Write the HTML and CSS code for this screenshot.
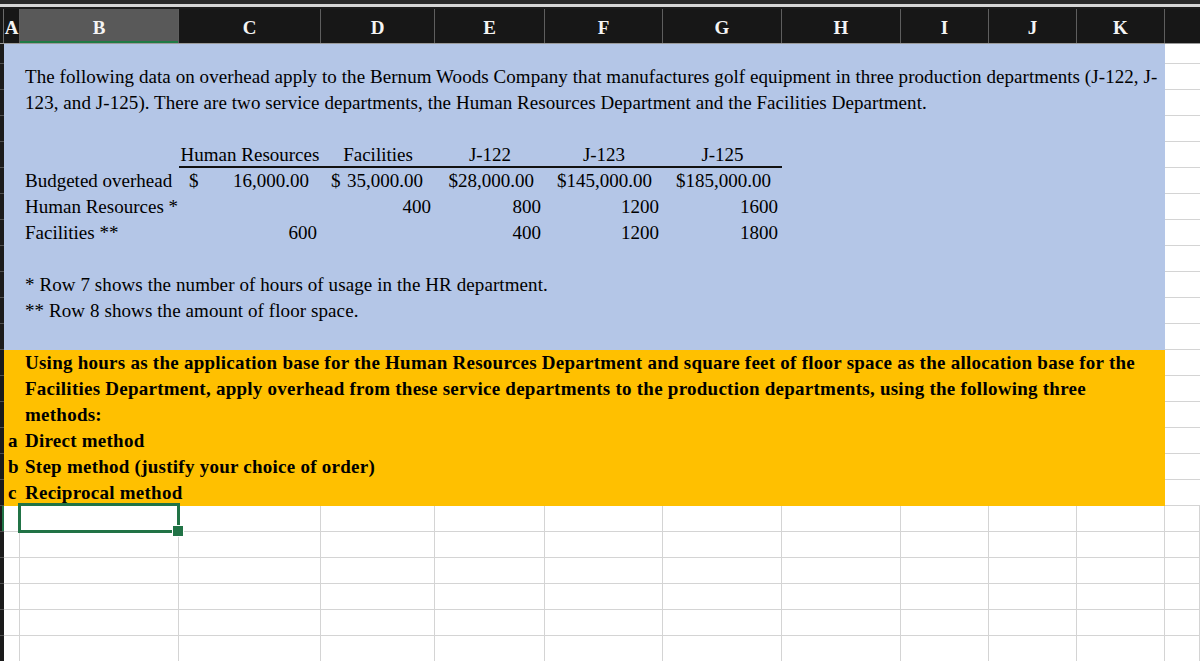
FILE: index.html
```html
<!DOCTYPE html>
<html lang="en">
<head>
<meta charset="utf-8">
<title>Overhead allocation</title>
<link rel="stylesheet" href="styles.css">
</head>
<body>
<div class="topbar"></div>
<div class="colheads">
  <div class="ch w-corner"></div>
  <div class="ch w-a">A</div>
  <div class="ch w-b active">B</div>
  <div class="ch w-c">C</div>
  <div class="ch w-d">D</div>
  <div class="ch w-e">E</div>
  <div class="ch w-f">F</div>
  <div class="ch w-g">G</div>
  <div class="ch w-h">H</div>
  <div class="ch w-i">I</div>
  <div class="ch w-j">J</div>
  <div class="ch w-k">K</div>
  <div class="ch w-rest"></div>
</div>
<div class="body">
  <div class="rowheads">
    <div class="rh first"></div>
    <div class="rh"></div><div class="rh"></div><div class="rh"></div><div class="rh"></div><div class="rh"></div>
    <div class="rh"></div><div class="rh"></div><div class="rh"></div><div class="rh"></div><div class="rh"></div>
    <div class="rh"></div><div class="rh"></div><div class="rh"></div><div class="rh"></div><div class="rh"></div>
    <div class="rh"></div><div class="rh"></div>
    <div class="rh sel"></div>
    <div class="rh"></div><div class="rh"></div><div class="rh"></div><div class="rh"></div><div class="rh"></div>
  </div>
  <div class="sheet">
    <div class="blue">
      <div class="para">The following data on overhead apply to the Bernum Woods Company that manufactures golf equipment in three production departments (J-122, J-<br>123, and J-125). There are two service departments, the Human Resources Department and the Facilities Department.</div>

      <div class="t hd r5 cc">Human Resources</div>
      <div class="t hd r5 cd">Facilities</div>
      <div class="t hd r5 ce">J-122</div>
      <div class="t hd r5 cf">J-123</div>
      <div class="t hd r5 cg">J-125</div>

      <div class="t lbl r6 cb">Budgeted overhead</div>
      <div class="t acct r6 cc"><span>$</span><span>16,000.00</span></div>
      <div class="t acct r6 cd"><span>$</span><span>35,000.00</span></div>
      <div class="t cur r6 ce">$28,000.00</div>
      <div class="t cur r6 cf">$145,000.00</div>
      <div class="t cur r6 cg">$185,000.00</div>

      <div class="t lbl r7 cb">Human Resources *</div>
      <div class="t num r7 cd">400</div>
      <div class="t num r7 ce">800</div>
      <div class="t num r7 cf">1200</div>
      <div class="t num r7 cg">1600</div>

      <div class="t lbl r8 cb">Facilities **</div>
      <div class="t num r8 cc">600</div>
      <div class="t num r8 ce">400</div>
      <div class="t num r8 cf">1200</div>
      <div class="t num r8 cg">1800</div>

      <div class="t note r10">* Row 7 shows the number of hours of usage in the HR department.</div>
      <div class="t note r11">** Row 8 shows the amount of floor space.</div>
    </div>

    <div class="orange">
      <div class="t wide r1">Using hours as the application base for the Human Resources Department and square feet of floor space as the allocation base for the</div>
      <div class="t wide r2">Facilities Department, apply overhead from these service departments to the production departments, using the following three</div>
      <div class="t wide r3">methods:</div>
      <div class="t letter r4">a</div>
      <div class="t wide r4">Direct method</div>
      <div class="t letter r5">b</div>
      <div class="t wide r5">Step method (justify your choice of order)</div>
      <div class="t letter r6">c</div>
      <div class="t wide r6">Reciprocal method</div>
    </div>

    <div class="rc"></div><div class="rc"></div><div class="rc"></div><div class="rc"></div><div class="rc"></div><div class="rc"></div>
    <div class="rc"></div><div class="rc"></div><div class="rc"></div><div class="rc"></div><div class="rc"></div><div class="rc"></div>
    <div class="rc"></div><div class="rc"></div><div class="rc"></div><div class="rc"></div><div class="rc"></div><div class="rc"></div>

    <div class="cell"></div><div class="cell sel"></div><div class="cell"></div><div class="cell"></div><div class="cell"></div><div class="cell"></div><div class="cell"></div><div class="cell"></div><div class="cell"></div><div class="cell"></div><div class="cell"></div><div class="cell"></div>
    <div class="cell"></div><div class="cell"></div><div class="cell"></div><div class="cell"></div><div class="cell"></div><div class="cell"></div><div class="cell"></div><div class="cell"></div><div class="cell"></div><div class="cell"></div><div class="cell"></div><div class="cell"></div>
    <div class="cell"></div><div class="cell"></div><div class="cell"></div><div class="cell"></div><div class="cell"></div><div class="cell"></div><div class="cell"></div><div class="cell"></div><div class="cell"></div><div class="cell"></div><div class="cell"></div><div class="cell"></div>
    <div class="cell"></div><div class="cell"></div><div class="cell"></div><div class="cell"></div><div class="cell"></div><div class="cell"></div><div class="cell"></div><div class="cell"></div><div class="cell"></div><div class="cell"></div><div class="cell"></div><div class="cell"></div>
    <div class="cell"></div><div class="cell"></div><div class="cell"></div><div class="cell"></div><div class="cell"></div><div class="cell"></div><div class="cell"></div><div class="cell"></div><div class="cell"></div><div class="cell"></div><div class="cell"></div><div class="cell"></div>
    <div class="cell"></div><div class="cell"></div><div class="cell"></div><div class="cell"></div><div class="cell"></div><div class="cell"></div><div class="cell"></div><div class="cell"></div><div class="cell"></div><div class="cell"></div><div class="cell"></div><div class="cell"></div>
  </div>
</div>
</body>
</html>
```
FILE: styles.css
```css
* { box-sizing: border-box; margin: 0; padding: 0; }
html, body { width: 1200px; height: 661px; overflow: hidden; background: #ffffff; }
body {
  font-family: "Liberation Serif", "Times New Roman", serif;
  font-size: 19px;
  color: #000;
}

/* top strip */
.topbar {
  height: 9px;
  background: #d6d6d6;
  border-top: 4px solid #2a2a2a;
  border-bottom: 2px solid #1c1c1c;
}

/* column headers */
.colheads {
  display: flex;
  height: 35px;
  background: #171717;
  border-bottom: 1px solid #9b9b9b;
}
.ch {
  flex: none;
  display: flex;
  align-items: center;
  justify-content: center;
  color: #f4f4f4;
  font-weight: bold;
  font-size: 19px;
  border-right: 1px solid #5e5e5e;
  padding-top: 3px;
}
.ch.active { background: #595959; box-shadow: inset 0 -2px 0 #1f7a45; }
.w-corner { width: 4px; border-right-color: #6a6a6a; }
.w-a { width: 16px; }
.w-b { width: 159px; }
.w-c { width: 142px; }
.w-d { width: 114px; }
.w-e { width: 110px; }
.w-f { width: 118px; }
.w-g { width: 119px; }
.w-h { width: 119px; }
.w-i { width: 88px; }
.w-j { width: 88px; }
.w-k { width: 88px; }
.w-rest { flex: 1; border-right: none; }

/* body */
.body { display: flex; }
.rowheads {
  flex: none;
  width: 4px;
  background: #1b1b1b;
  display: flex;
  flex-direction: column;
}
.rh { flex: none; height: 26px; border-bottom: 1px solid #4f4f4f; }
.rh.first { height: 20px; }
.rh.sel { box-shadow: inset -2px 0 0 #217346; }

.sheet {
  --cols: 16px 159px 142px 114px 110px 118px 119px 119px 88px 88px 88px;
  flex: 1;
  display: grid;
  grid-template-columns: var(--cols) 1fr;
  grid-template-rows: 20px repeat(23, 26px);
}

.blue {
  grid-column: 1 / 12;
  grid-row: 1 / 13;
  background: #b4c6e7;
  display: grid;
  grid-template-columns: var(--cols);
  grid-template-rows: 20px repeat(11, 26px);
}
.orange {
  grid-column: 1 / 12;
  grid-row: 13 / 19;
  background: #ffc000;
  display: grid;
  grid-template-columns: var(--cols);
  grid-template-rows: repeat(6, 26px);
  font-weight: bold;
  letter-spacing: 0.25px;
}

.t { white-space: nowrap; line-height: 26px; }

.r1 { grid-row: 1; }
.r2 { grid-row: 2; }
.r3 { grid-row: 3; }
.r4 { grid-row: 4; }
.r5 { grid-row: 5; }
.r6 { grid-row: 6; }
.r7 { grid-row: 7; }
.r8 { grid-row: 8; }
.r10 { grid-row: 10; }
.r11 { grid-row: 11; }

.cb { grid-column: 2; }
.cc { grid-column: 3; }
.cd { grid-column: 4; }
.ce { grid-column: 5; }
.cf { grid-column: 6; }
.cg { grid-column: 7; }

.para {
  grid-column: 2 / 12;
  grid-row: 2 / 4;
  padding-left: 5px;
  line-height: 26px;
  white-space: nowrap;
  letter-spacing: 0.07px;
}
.hd { text-align: center; box-shadow: inset 0 -2px 0 #111; }
.lbl { padding-left: 5px; }
.num { text-align: right; padding-right: 4px; }
.cur { text-align: right; padding-right: 11px; }
.acct { display: flex; justify-content: space-between; padding: 0 12px 0 10px; }
.note { grid-column: 2 / 12; padding-left: 5px; letter-spacing: 0.09px; }

.wide { grid-column: 2 / 12; padding-left: 5px; }
.letter { grid-column: 1; padding-left: 4px; letter-spacing: 0; }

/* white cells */
.rc { border-bottom: 1px solid #d4d4d4; }
.cell { border-right: 1px solid #d4d4d4; border-bottom: 1px solid #d4d4d4; }
.cell.sel { position: relative; z-index: 2; border-color: transparent; }
.cell.sel::after {
  content: "";
  position: absolute;
  left: -2px; top: -3px; right: -2px; bottom: -2px;
  border: 3px solid #217346;
}
.cell.sel::before {
  content: "";
  position: absolute;
  right: -6px; bottom: -6px;
  width: 10px; height: 10px;
  background: #217346;
  border: 1px solid #ffffff;
  z-index: 1;
}
```
